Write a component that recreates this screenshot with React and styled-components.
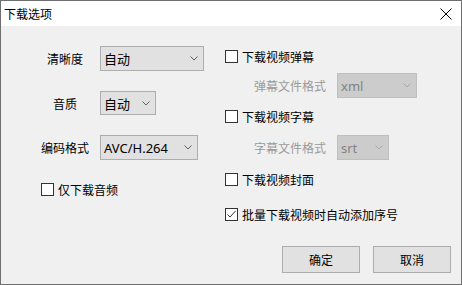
import React, { useState } from 'react';
import styled, { createGlobalStyle } from 'styled-components';

const Global = createGlobalStyle`
html, body { margin: 0; padding: 0; background: #fff; }
body { font-family: "Noto Sans", "Noto Sans CJK SC", sans-serif; font-size: 12px; color: #000; }
`;

const Window = styled.div`
width: 462px;
height: 285px;
box-sizing: border-box;
border: 1px solid #6f6f6f;
display: flex;
flex-direction: column;
background: #f0f0f0;
`;

const TitleBar = styled.div`
height: 25px;
background: #fff;
display: flex;
align-items: center;
justify-content: space-between;
padding: 0 9px 0 3px;
font-family: "Noto Sans CJK SC", sans-serif;
font-size: 12px;
`;

const Body = styled.div`
flex: 1;
display: flex;
flex-direction: column;
`;

const Columns = styled.div`
display: flex;
`;

const LeftCol = styled.div`
width: 184px;
margin-left: 40px;
padding-top: 20px;
display: grid;
grid-template-columns: 48px auto;
grid-template-rows: 25px 24px 25px;
column-gap: 11px;
row-gap: 20px;
align-items: center;
align-content: start;
`;

const Label = styled.span`
font-family: "Noto Sans CJK SC", sans-serif;
font-size: 12px;
text-align: center;
white-space: nowrap;
color: ${p => (p.disabled ? '#9a9a9a' : '#000')};
`;

const Select = styled.div`
width: ${p => p.w}px;
height: ${p => p.h || 25}px;
box-sizing: border-box;
border: 1px solid ${p => (p.disabled ? '#bfbfbf' : '#adadad')};
background: ${p => (p.disabled ? '#cccccc' : '#e1e1e1')};
color: ${p => (p.disabled ? '#838383' : '#000')};
display: flex;
align-items: center;
justify-content: space-between;
padding: 0 5px 0 3px;
font-family: "Noto Sans", "Noto Sans CJK SC", sans-serif;
font-size: 13px;
svg { flex: none; }
`;

const RightCol = styled.div`
display: flex;
flex-direction: column;
`;

const CheckRow = styled.label`
display: flex;
align-items: center;
height: 20px;
gap: 4px;
margin-top: ${p => p.mt || 0}px;
grid-column: ${p => (p.span ? '1 / span 2' : 'auto')};
font-family: "Noto Sans CJK SC", sans-serif;
font-size: 12px;
white-space: nowrap;
`;

const Box = styled.span`
width: 13px;
height: 13px;
box-sizing: border-box;
border: 1px solid #333;
background: #fff;
display: flex;
align-items: center;
justify-content: center;
`;

const SubRow = styled.div`
display: flex;
align-items: center;
margin-top: ${p => p.mt}px;
margin-left: 29px;
gap: 11px;
`;

const Footer = styled.div`
margin-top: auto;
display: flex;
justify-content: flex-end;
gap: 13px;
padding: 0 10px 11px 0;
`;

const Button = styled.button`
width: 78px;
height: 27px;
border: 1px solid #adadad;
background: #e1e1e1;
font-family: "Noto Sans CJK SC", sans-serif;
font-size: 12px;
color: #000;
padding: 0;
`;

const Chevron = ({ color = '#606060' }) => (
  <svg width="8" height="5" viewBox="0 0 8 5">
    <polyline points="0.5,0.5 4,4 7.5,0.5" fill="none" stroke={color} strokeWidth="1" />
  </svg>
);

const Check = ({ checked, children, mt, span }) => (
  <CheckRow mt={mt} span={span}>
    <Box>
      {checked && (
        <svg width="11" height="11" viewBox="0 0 11 11">
          <polyline points="1.5,5.5 4,8 9.5,2" fill="none" stroke="#333" strokeWidth="1" />
        </svg>
      )}
    </Box>
    {children}
  </CheckRow>
);

const Drop = ({ value, w, h, disabled }) => (
  <Select w={w} h={h} disabled={disabled}>
    <span>{value}</span>
    <Chevron color={disabled ? '#a8a8a8' : '#606060'} />
  </Select>
);

export default function App() {
  const [opts] = useState({ quality: '自动', audio: '自动', codec: 'AVC/H.264' });
  return (
    <>
      <Global />
      <Window>
        <TitleBar>
          <span>下载选项</span>
          <svg width="12" height="12" viewBox="0 0 12 12">
            <path d="M0.5 0.5L11.5 11.5M11.5 0.5L0.5 11.5" stroke="#000" strokeWidth="1" />
          </svg>
        </TitleBar>
        <Body>
          <Columns>
            <LeftCol>
              <Label>清晰度</Label>
              <Drop value={opts.quality} w={104} />
              <Label>音质</Label>
              <Drop value={opts.audio} w={56} h={24} />
              <Label>编码格式</Label>
              <Drop value={opts.codec} w={98} />
              <Check span mt={-1}>仅下载音频</Check>
            </LeftCol>
            <RightCol>
              <Check mt={20}>下载视频弹幕</Check>
              <SubRow mt={7}>
                <Label disabled>弹幕文件格式</Label>
                <Drop value="xml" w={80} disabled />
              </SubRow>
              <Check mt={8}>下载视频字幕</Check>
              <SubRow mt={9}>
                <Label disabled>字幕文件格式</Label>
                <Drop value="srt" w={52} disabled />
              </SubRow>
              <Check mt={9}>下载视频封面</Check>
              <Check mt={15} checked>批量下载视频时自动添加序号</Check>
            </RightCol>
          </Columns>
          <Footer>
            <Button>确定</Button>
            <Button>取消</Button>
          </Footer>
        </Body>
      </Window>
    </>
  );
}
